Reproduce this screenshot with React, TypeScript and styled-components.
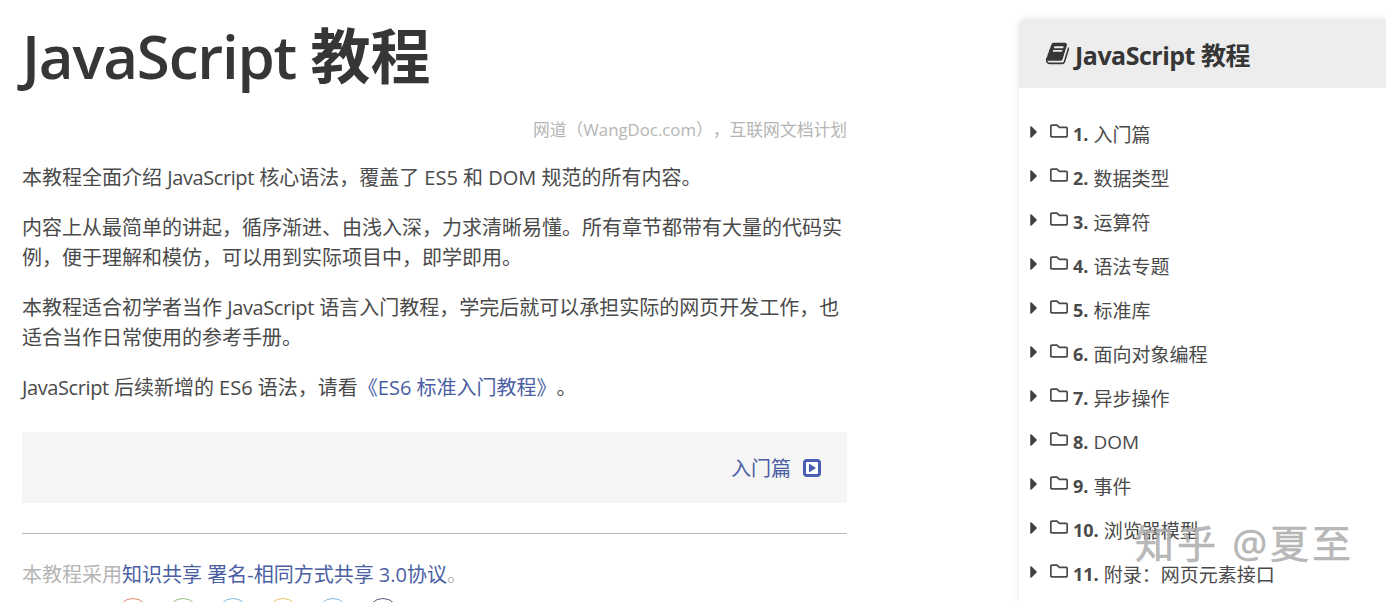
import styled, { createGlobalStyle } from 'styled-components';
import { FaCaretRight, FaRegFolder } from 'react-icons/fa';

const chapters = [
  ['1.', '入门篇'],
  ['2.', '数据类型'],
  ['3.', '运算符'],
  ['4.', '语法专题'],
  ['5.', '标准库'],
  ['6.', '面向对象编程'],
  ['7.', '异步操作'],
  ['8.', 'DOM'],
  ['9.', '事件'],
  ['10.', '浏览器模型'],
  ['11.', '附录：网页元素接口'],
];

const badges = ['#e08a6a', '#8fbf7f', '#7fb8d8', '#e8c56a', '#7fb8e0', '#555a7a'];

const GlobalStyle = createGlobalStyle`
  html, body {
    margin: 0;
    height: 602px;
    overflow: hidden;
    background: #fff;
  }
  body {
    font-family: "Open Sans", "Noto Sans CJK SC", sans-serif;
    color: #4a4a4a;
    text-spacing-trim: space-all;
  }
`;

const BookGlyph = () => <svg width="25" height="25" viewBox="0 0 1664 1792" fill="currentColor">
  <path d="M1639 478q40 57 18 129l-275 906q-19 64-76.5 107.5t-122.5 43.5h-923q-77 0-148.5-53.5t-99.5-131.5q-24-67-2-127 0-4 3-27t4-37q1-8-3-21.5t-3-19.5q2-11 8-21t16.5-23.5 16.5-23.5q23-38 45-91.5t30-91.5q3-10 .5-30t-.5-28q3-11 17-28t17-23q21-36 42-92t25-90q1-9-2.5-32t.5-28q4-13 22-30.5t22-22.5q19-26 42.5-84.5t27.5-96.5q1-8-3-25.5t-2-26.5q2-8 9-18t18-23 17-21q8-12 16.5-30.5t15-35 16-36 19.5-32 26.5-23.5 36-11.5 47.5 5.5l-1 3q38-9 51-9h761q74 0 114 56t18 130l-274 906q-36 119-71.5 153.5t-128.5 34.5h-869q-27 0-38 15-11 16-1 43 24 70 144 70h923q29 0 56-15.5t35-41.5l300-987q7-22 5-57 38 15 59 43zm-1064 2q-4 13 2 22.5t20 9.5h608q13 0 25.5-9.5t16.5-22.5l21-64q4-13-2-22.5t-20-9.5h-608q-13 0-25.5 9.5t-16.5 22.5zm-83 256q-4 13 2 22.5t20 9.5h608q13 0 25.5-9.5t16.5-22.5l21-64q4-13-2-22.5t-20-9.5h-608q-13 0-25.5 9.5t-16.5 22.5z" />
</svg>;

const NextGlyph = () => <svg width="18" height="18" viewBox="0 0 18 18">
  <rect x="1.5" y="1.5" width="15" height="15" rx="2.5" fill="#fff" stroke="currentColor" strokeWidth="3" />
  <path d="M6 4.5l7 4.5-7 4.5z" fill="currentColor" />
</svg>;

const App = () => {
  return <Page>
    <GlobalStyle />
    <Main>
      <Title>JavaScript <TitleCjk>教程</TitleCjk></Title>
      <Subtitle>网道（WangDoc.com），互联网文档计划</Subtitle>
      <Paragraph>本教程全面介绍 <Latin>JavaScript</Latin> 核心语法，覆盖了 ES5 和 DOM 规范的所有内容。</Paragraph>
      <Paragraph>内容上从最简单的讲起，循序渐进、由浅入深，力求清晰易懂。所有章节都带有大量的代码实例，便于理解和模仿，可以用到实际项目中，即学即用。</Paragraph>
      <Paragraph>本教程适合初学者当作 <Latin>JavaScript</Latin> 语言入门教程，学完后就可以承担实际的网页开发工作，也适合当作日常使用的参考手册。</Paragraph>
      <Paragraph><Latin>JavaScript</Latin> 后续新增的 ES6 语法，请看<TextLink>《ES6 标准入门教程》</TextLink>。</Paragraph>
      <NextBar>
        <TextLink>入门篇</TextLink>
        <NextIcon><NextGlyph /></NextIcon>
      </NextBar>
      <Divider />
      <License>本教程采用<TextLink>知识共享 署名-相同方式共享 3.0协议</TextLink>。</License>
      <BadgeRow>
        {badges.map(color => <Badge key={color} $color={color} />)}
      </BadgeRow>
    </Main>
    <Sidebar>
      <SidebarHead>
        <BookIcon><BookGlyph /></BookIcon>
        JavaScript 教程
      </SidebarHead>
      <ChapterList>
        {chapters.map(([num, name]) => <Chapter key={num}>
          <Caret><FaCaretRight /></Caret>
          <FolderIcon><FaRegFolder /></FolderIcon>
          <ChapterNum>{num}</ChapterNum>
          <span>{name}</span>
        </Chapter>)}
      </ChapterList>
    </Sidebar>
    <Watermark>知乎 @夏至</Watermark>
  </Page>
};

export default App;

const Page = styled.div`
  position: relative;
  display: flex;
  width: 1386px;
  height: 602px;
  overflow: hidden;
  justify-content: space-between;
`;

const Main = styled.main`
  width: 825px;
  margin-left: 22px;
  flex-shrink: 0;
`;

const Title = styled.h1`
  margin: 15px 0 0;
  font-size: 60px;
  line-height: 82px;
  font-weight: 600;
  letter-spacing: -1.2px;
  color: #363636;
`;

const TitleCjk = styled.span`
  font-weight: 700;
  letter-spacing: 0;
`;

const Subtitle = styled.div`
  margin-top: 20px;
  text-align: right;
  font-size: 16.8px;
  line-height: 26px;
  color: #b5b5b5;
`;

const Paragraph = styled.p`
  margin: 20px 0 0;
  font-size: 20px;
  line-height: 30px;
`;

const Latin = styled.span`
  letter-spacing: -0.4px;
`;

const TextLink = styled.a`
  color: #4a5ea3;
`;

const NextBar = styled.div`
  display: flex;
  align-items: center;
  justify-content: flex-end;
  height: 71px;
  margin-top: 29px;
  padding-right: 26px;
  font-size: 20px;
  background: #f5f5f5;
`;

const NextIcon = styled.span`
  display: flex;
  margin-left: 12px;
  color: #4a5eb0;
`;

const Divider = styled.hr`
  height: 1px;
  margin: 30px 0 0;
  border: 0;
  background: #b8b8b8;
`;

const License = styled.div`
  margin-top: 26px;
  font-size: 20px;
  line-height: 30px;
  color: #b5b5b5;
`;

const BadgeRow = styled.div`
  display: flex;
  gap: 18px;
  margin: 8px 0 0 95px;
`;

const Badge = styled.span<{ $color: string }>`
  width: 32px;
  height: 32px;
  flex-shrink: 0;
  border: 1.5px solid ${({ $color }) => $color};
  border-radius: 50%;
  box-sizing: border-box;
`;

const Sidebar = styled.aside`
  width: 367px;
  margin-top: 19px;
  flex-shrink: 0;
  border-radius: 6px 0 0 0;
  box-shadow: 0 0 6px rgba(0, 0, 0, 0.1);
`;

const SidebarHead = styled.div`
  display: flex;
  align-items: center;
  height: 69px;
  padding-left: 26px;
  font-size: 25px;
  font-weight: 700;
  letter-spacing: -0.5px;
  color: #363636;
  background: #ededed;
  border-radius: 6px 0 0 0;
`;

const BookIcon = styled.span`
  display: flex;
  margin-right: 5px;
`;

const ChapterList = styled.ul`
  margin: 0;
  padding: 24px 0 0 5px;
  list-style: none;
`;

const Chapter = styled.li`
  display: flex;
  align-items: center;
  height: 44px;
  font-size: 19px;
`;

const Caret = styled.span`
  display: flex;
  width: 26px;
  margin-top: -4px;
  font-size: 20px;
  color: #404040;
`;

const FolderIcon = styled.span`
  display: flex;
  width: 23px;
  margin-top: -6px;
  font-size: 18px;
`;

const ChapterNum = styled.b`
  margin-right: 5px;
  font-size: 18px;
  font-weight: 700;
`;

const Watermark = styled.div`
  position: absolute;
  left: 1135px;
  top: 518px;
  font-size: 39px;
  line-height: 50px;
  white-space: nowrap;
  letter-spacing: 3px;
  color: rgba(175, 175, 175, 0.9);
  -webkit-text-stroke: 0.6px rgba(175, 175, 175, 0.9);
`;
